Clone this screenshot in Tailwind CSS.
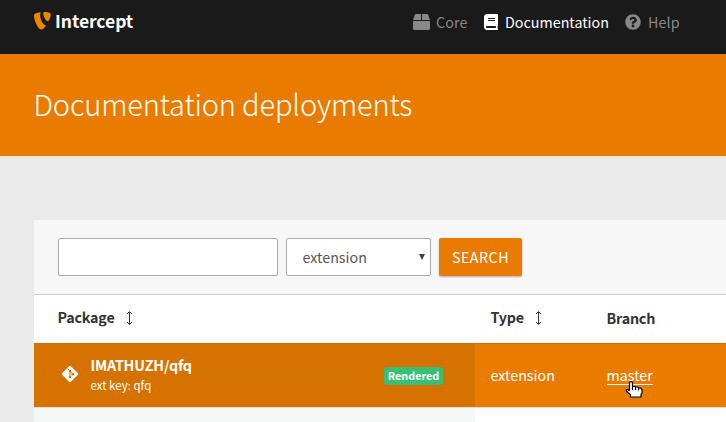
<!DOCTYPE html>
<html lang="en">
<head>
<meta charset="utf-8">
<title>Intercept</title>
<script src="https://cdn.jsdelivr.net/npm/@tailwindcss/browser@4"></script>
</head>
<body class="w-[726px] h-[422px] overflow-hidden bg-[#eaeaea] font-['Noto_Sans_CJK_SC',sans-serif] text-[14.3px] leading-5 text-[#333] whitespace-nowrap">
<header class="flex h-[54px] items-start bg-[#1a1a1a] pl-[34px] pt-3">
  <a class="flex w-[379px] gap-1 text-[17.5px] font-bold text-white">
    <svg class="h-[18px] w-[17px]" viewBox="0 0 17 18" fill="#f08400"><path d="M6.800.3C4 .6 1.200 1.200.4 2.200 0 2.700 0 3.200 0 4c0 3.800 3.900 13.600 7.200 13.600 1.400 0 3.200-1.700 4.800-4.100C8.800 13.500 4.500 4.500 6.800.3Z"/><path d="M10.200 0c3.500 0 6.500.6 6.500 2.300 0 3.500-1.800 7-3 7-1.900 0-4.400-4.800-4.400-7.500 0-1.300.2-1.800.9-1.800Z"/></svg>
    <span class="-mt-px tracking-[-.05px]">Intercept</span>
  </a>
  <nav class="flex text-[#888]">
    <a class="flex w-[71px] gap-[7px]">
      <svg class="mt-[2px] h-4 w-[17px]" viewBox="0 0 512 512" preserveAspectRatio="none" fill="currentColor"><path d="M509.500 184.600L458.900 32.800C452.400 13.200 434.100 0 413.400 0H272v192h238.700c-.4-2.500-.4-5-1.200-7.400zM240 0H98.600c-20.700 0-39 13.200-45.500 32.800L2.500 184.600c-.8 2.400-.8 4.900-1.200 7.400H240V0zM0 224v240c0 26.500 21.500 48 48 48h416c26.500 0 48-21.500 48-48V224H0z"/></svg><span class="-ml-px tracking-[.1px]">Core</span>
    </a>
    <a class="flex w-[141px] gap-[7px] text-white">
      <svg class="mt-[2px] h-4 w-[14px]" viewBox="0 0 448 512" fill="currentColor"><path d="M448 360V24c0-13.300-10.700-24-24-24H96C43 0 0 43 0 96v320c0 53 43 96 96 96h328c13.300 0 24-10.700 24-24v-16c0-7.500-3.500-14.300-8.900-18.700-4.200-15.400-4.200-59.300 0-74.700 5.400-4.300 8.900-11.100 8.900-18.600zM128 134c0-3.300 2.700-6 6-6h212c3.300 0 6 2.700 6 6v20c0 3.300-2.700 6-6 6H134c-3.300 0-6-2.700-6-6v-20zm0 64c0-3.300 2.700-6 6-6h212c3.300 0 6 2.700 6 6v20c0 3.300-2.700 6-6 6H134c-3.300 0-6-2.700-6-6v-20zm253.400 250H96c-17.700 0-32-14.300-32-32 0-17.600 14.400-32 32-32h285.400c-1.900 17.100-1.900 46.900 0 64z"/></svg><span>Documentation</span>
    </a>
    <a class="flex gap-[7px]">
      <svg class="mt-[2px] size-4" viewBox="0 0 512 512" fill="currentColor"><path d="M504 256c0 137-111 248-248 248S8 393 8 256C8 119 119 8 256 8s248 111 248 248zM262.700 90c-54.500 0-89.300 23-116.500 63.800-3.500 5.300-2.400 12.400 2.700 16.300l34.700 26.300c5.200 3.900 12.600 3 16.700-2.100 17.900-22.700 30.100-35.800 57.300-35.800 20.400 0 45.700 13.100 45.700 33 0 15-12.400 22.700-32.500 34C247.100 238.500 216 254.900 216 296v4c0 6.600 5.400 12 12 12h56c6.600 0 12-5.400 12-12v-1.300c0-28.500 83.200-29.600 83.200-106.700 0-58-60.200-102-116.500-102zM256 338c-25.400 0-46 20.600-46 46 0 25.400 20.600 46 46 46s46-20.600 46-46c0-25.400-20.600-46-46-46z"/></svg><span class="tracking-[.1px]">Help</span>
    </a>
  </nav>
</header>
<section class="h-[102px] bg-[#e97c00] pl-[33.500px] pt-[29px]">
  <h1 class="text-[29px] font-extralight leading-10 tracking-[-.15px] text-white">Documentation deployments</h1>
</section>
<main class="ml-[34px] mt-16 w-[692px] bg-white">
  <form class="flex h-[75px] gap-2 border-b border-[#ccc] bg-[#f7f7f7] pl-6 pt-[18px]">
    <div class="h-[38px] w-[220px] rounded-[2px] border border-[#aaa] bg-white"></div>
    <div class="flex h-[38px] w-[145px] items-center justify-between rounded-[2px] border border-[#aaa] bg-white pl-[15.500px] pr-[5px] text-[#555]"><span>extension</span><svg class="h-[6px] w-[6px]" viewBox="0 0 7 6" preserveAspectRatio="none"><path d="M0 0h7L3.500 6Z" fill="#444"/></svg></div>
    <div class="flex h-[38px] w-[83px] items-center justify-center rounded-[2px] bg-[#e97c00] tracking-[.5px] text-white shadow-[0_1px_2px_rgba(0,0,0,.3)]">SEARCH</div>
  </form>
  <div class="flex h-[44px] items-center font-bold tracking-[-.2px]">
    <div class="flex w-[440.500px] items-center gap-[11px] pl-[23.500px]"><span>Package</span><svg class="mt-px h-[14px] w-[7px]" viewBox="0 0 7 14" fill="none" stroke="#333"><path d="M3.500 1v12M1 3l2.500-2.500L6 3M1 11l2.500 2.500L6 11"/></svg></div>
    <div class="flex w-[116px] items-center gap-[11px] pl-4"><span>Type</span><svg class="mt-px h-[14px] w-[7px]" viewBox="0 0 7 14" fill="none" stroke="#333"><path d="M3.500 1v12M1 3l2.500-2.500L6 3M1 11l2.500 2.500L6 11"/></svg></div>
    <div class="pl-4 pt-[2px]">Branch</div>
  </div>
  <div class="mt-1 flex h-16 border-t border-[#d07000] bg-[#e97c00] text-white">
    <div class="flex w-[441px] items-center bg-[#d67200] pl-[27px]">
      <svg class="-mt-[3px] mr-[11.500px] size-[18px]" viewBox="0 0 18 18"><rect x="2.900" y="2.900" width="12.200" height="12.200" rx="1" transform="rotate(45 9 9)" fill="#fff"/><path d="M6.500 3.500 9 6v6M9 6.500l3 3" fill="none" stroke="#d67200"/><g fill="#d67200"><circle cx="9" cy="6" r="1.300"/><circle cx="9" cy="12" r="1.300"/><circle cx="12" cy="9.300" r="1.300"/></g></svg>
      <div class="-mt-[2px] w-[293.500px]"><div class="-mt-px mb-px font-bold tracking-[-.2px]">IMATHUZH/qfq</div><div class="text-[11.5px] leading-[18px]">ext key: qfq</div></div>
      <span class="flex h-[18px] w-[59px] items-center justify-center rounded-[3px] bg-[#38bf75] pb-px text-[10.8px] font-bold">Rendered</span>
    </div>
    <div class="flex w-[116px] items-center pb-[2px] pl-[15.500px]">extension</div>
    <div class="relative flex items-center pl-[15.500px]"><span class="h-[19px] border-b border-white leading-[17px]">master</span>
      <svg class="absolute left-[34px] top-[37px] h-[17px] w-[18px]" viewBox="0 0 18 17" fill="#fff" stroke="#000" stroke-width="1.200"><path d="M4.500 9.500V2Q4.500.6 6 .6T7.500 2v3.500h2.500l.5.500h2.500l.5 1h2l1.500 1.500V12l-1 1.500v2.500H5.500v-2.500L3.500 12 1.500 10.500V8.500H3l1.500 1.500M7.500 5v4M10.500 6v3M13.500 7v2.500"/></svg>
    </div>
  </div>
  <div class="flex h-4 border-t border-[#ddd]"><div class="w-[441px] bg-[#f5f7f6]"></div></div>
</main>
</body>
</html>
